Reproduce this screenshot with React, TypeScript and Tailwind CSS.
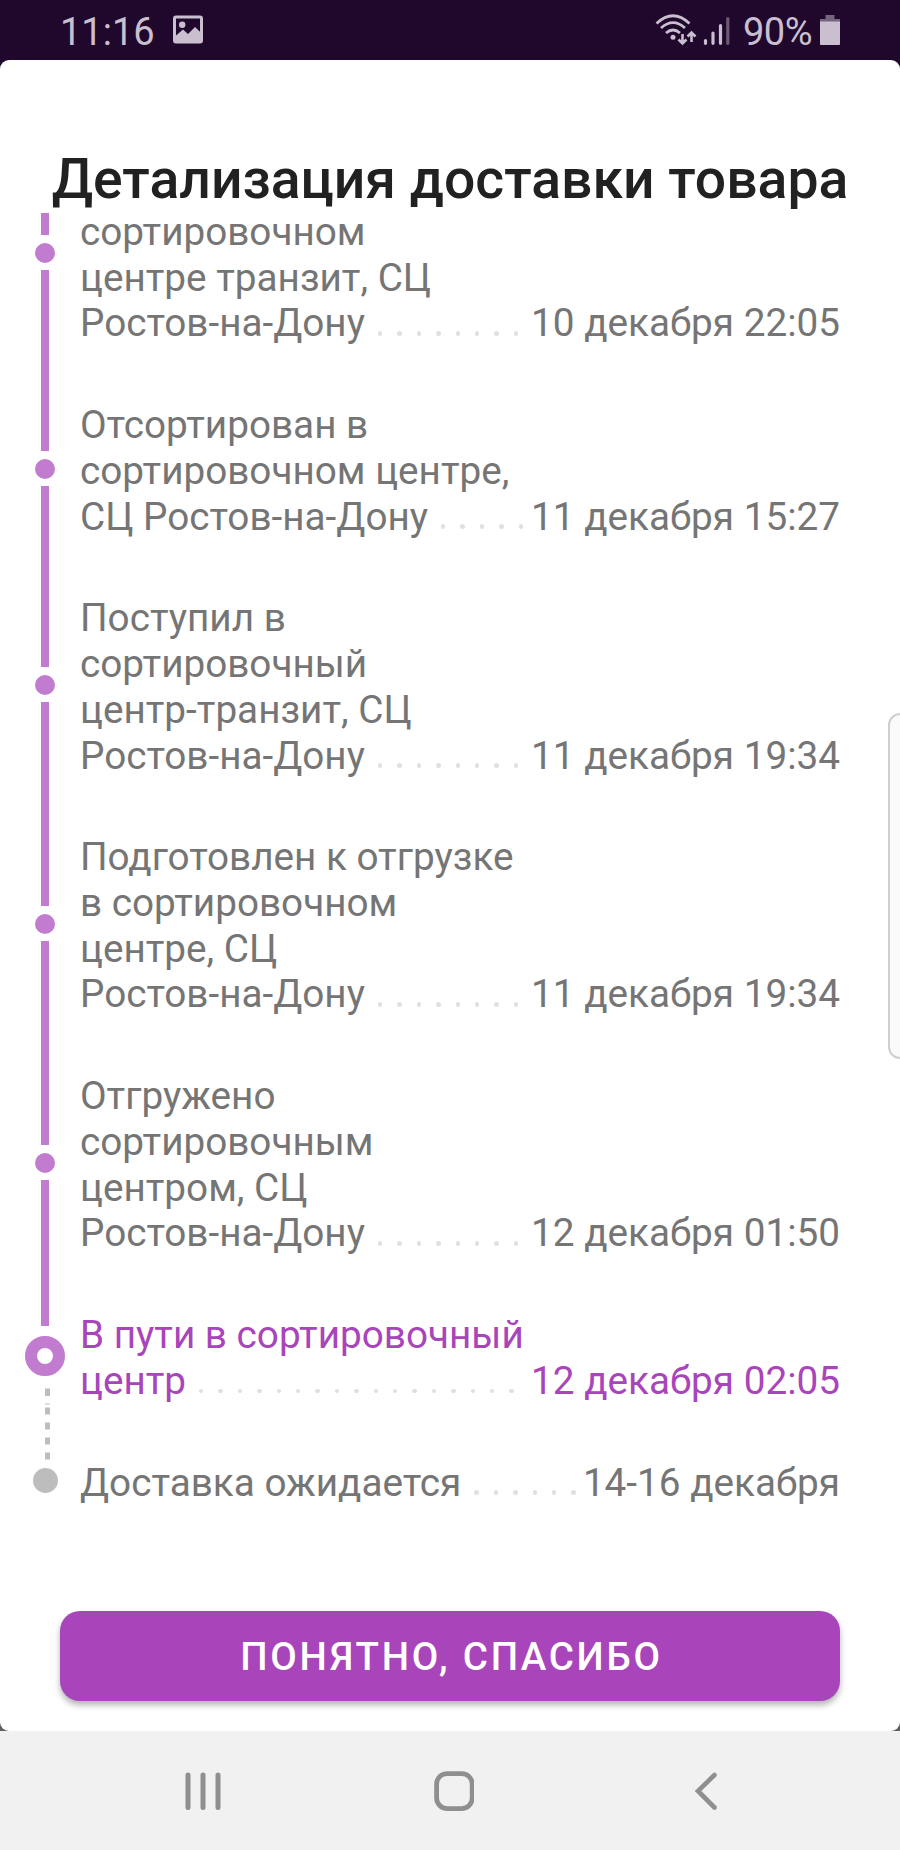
import React from 'react';
import clsx from 'clsx';

interface Step {
  lines: string[];
  date: string;
  dots: number;
  state: 'first' | 'done' | 'current' | 'pending';
}

const steps: Step[] = [
  { lines: ['сортировочном', 'центре транзит, СЦ', 'Ростов-на-Дону'], date: '10 декабря 22:05', dots: 8, state: 'first' },
  { lines: ['Отсортирован в', 'сортировочном центре,', 'СЦ Ростов-на-Дону'], date: '11 декабря 15:27', dots: 5, state: 'done' },
  { lines: ['Поступил в', 'сортировочный', 'центр-транзит, СЦ', 'Ростов-на-Дону'], date: '11 декабря 19:34', dots: 8, state: 'done' },
  { lines: ['Подготовлен к отгрузке', 'в сортировочном', 'центре, СЦ', 'Ростов-на-Дону'], date: '11 декабря 19:34', dots: 8, state: 'done' },
  { lines: ['Отгружено', 'сортировочным', 'центром, СЦ', 'Ростов-на-Дону'], date: '12 декабря 01:50', dots: 8, state: 'done' },
  { lines: ['В пути в сортировочный', 'центр'], date: '12 декабря 02:05', dots: 17, state: 'current' },
  { lines: ['Доставка ожидается'], date: '14-16 декабря', dots: 6, state: 'pending' },
];

function StatusBar() {
  return (
    <header className="flex h-[60px] shrink-0 items-start justify-between bg-[#1f082c] px-[60px] text-[#c9bfcf]">
      <div className="flex items-start">
        <span className="mt-[10px] w-[113px] text-[38px] leading-[44px]">11:16</span>
        <svg className="mt-[15px]" width="30" height="29" viewBox="0 0 30 29">
          <path
            fill="currentColor"
            fillRule="evenodd"
            d="M3 0.5h24a3 3 0 0 1 3 3v22a3 3 0 0 1-3 3H3a3 3 0 0 1-3-3v-22a3 3 0 0 1 3-3zM3 3.5v17l7-6 5 4.5 7-7 5 4.8V3.5z"
          />
          <circle cx="9.2" cy="9.8" r="3.2" fill="currentColor" />
        </svg>
      </div>
      <div className="flex items-start">
        <svg className="mt-[14px]" width="76" height="32" viewBox="0 0 76 32" fill="none" stroke="currentColor">
          <g strokeWidth="2.7">
            <path d="M1.5 9.5Q18-6 34.5 9.5" />
            <path d="M6 14Q18 3.2 30 14" />
            <path d="M11 19Q18 13 25 19" />
          </g>
          <circle cx="18" cy="23.3" r="2.5" fill="currentColor" stroke="none" />
          <path strokeWidth="2.6" d="M27.5 20v9M23.5 25.5l4 4 4-4M36.5 28v-9M32.5 22.5l4-4 4 4" />
          <g strokeWidth="3.2" strokeLinecap="round">
            <path d="M50.5 26.5v2.8M58 19v10.3M65.5 11.5v17.8" />
            <path d="M72.8 4.5v24.8" opacity="0.45" />
          </g>
        </svg>
        <span className="ml-[12px] mt-[10px] w-[77px] whitespace-nowrap text-[38px] leading-[44px] tracking-[-0.5px]">90%</span>
        <svg className="mt-[15px]" width="20" height="30" viewBox="0 0 20 30" fill="currentColor">
          <path d="M5.5 0h9v4H20v3H0V4h5.5z" opacity="0.5" />
          <path d="M0 6.5h20V29a1 1 0 0 1-1 1H1a1 1 0 0 1-1-1z" />
        </svg>
      </div>
    </header>
  );
}

function Rail({ state }: { state: Step['state'] }) {
  if (state === 'pending') {
    return (
      <div className="flex w-20 shrink-0 items-center pl-[32.5px]">
        <span className="size-[25px] rounded-full bg-[#bdbdbd]" />
      </div>
    );
  }

  if (state === 'current') {
    return (
      <div className="flex w-20 shrink-0 flex-col items-center pl-[10px]">
        <span className="mb-[10px] w-2 flex-1 bg-[#c27ccf]" />
        <span className="size-10 rounded-full border-[12.5px] border-[#c27ccf]" />
        {/* the dashes run on into the pending step */}
        <div className="h-[53.5px] w-[5px] pt-3">
          <svg className="ml-[2.5px] overflow-visible" width="5" height="72" viewBox="0 0 5 72" fill="#bdbdbd">
            <path d="M0 0.5h5v7.5H0zM0 15.5h5v1H0zM0 19.5h5v7H0zM0 34.5h5v7H0zM0 49.5h5v7H0zM0 64.5h5v7H0z" />
          </svg>
        </div>
      </div>
    );
  }

  return (
    <div className="flex w-20 shrink-0 flex-col items-center pl-[10px]">
      <span className={clsx('w-2 bg-[#c27ccf]', state === 'first' ? 'h-[22px]' : 'flex-1')} />
      <span className="my-[7.5px] size-5 rounded-full bg-[#c27ccf]" />
      <span className="w-2 flex-1 bg-[#c27ccf]" />
    </div>
  );
}

function Leader({ count }: { count: number }) {
  return (
    <span className="ml-[13px] flex flex-1 gap-[15px] pb-[10.5px]">
      {Array.from({ length: count }, (_, i) => (
        <i key={i} className="size-[4.4px] shrink-0 rounded-full bg-[#e0e0e0]" />
      ))}
    </span>
  );
}

function StepRow({ step }: { step: Step }) {
  const head = step.lines.slice(0, -1);
  const last = step.lines[step.lines.length - 1];

  return (
    <li className="flex pr-[60px]">
      <Rail state={step.state} />
      <div
        className={clsx(
          'flex-1 whitespace-nowrap pb-[26px] text-[38.7px] leading-[45.7px]',
          step.state === 'first' ? '-mt-1' : 'pt-[30.1px]',
          step.state === 'current' ? 'text-[#a845bb]' : 'text-[#757575]'
        )}
      >
        {head.map((line) => (
          <p key={line}>{line}</p>
        ))}
        <div className="flex items-end">
          <span>{last}</span>
          <Leader count={step.dots} />
          <time>{step.date}</time>
        </div>
      </div>
    </li>
  );
}

function NavBar() {
  return (
    <nav className="flex h-[119px] shrink-0 items-start bg-[#f1f1f1] pt-[40px]">
      <button className="ml-[183px]">
        <svg width="40" height="40" viewBox="0 0 40 40" stroke="#8f8f8f" strokeWidth="5" strokeLinecap="round">
          <path d="M5 4v32.5M20 4v32.5M35 4v32.5" />
        </svg>
      </button>
      <button className="ml-[211px]">
        <svg width="40" height="41" viewBox="0 0 40 41" fill="none" stroke="#8f8f8f" strokeWidth="4.8">
          <rect x="2.6" y="2.6" width="35.6" height="35" rx="10.5" />
        </svg>
      </button>
      <button className="ml-[219px]">
        <svg width="26" height="40" viewBox="0 0 26 40" fill="none" stroke="#8f8f8f" strokeWidth="4.6" strokeLinecap="round">
          <path d="M21.5 4L5 20l16.500 16.500" />
        </svg>
      </button>
    </nav>
  );
}

export default function App() {
  return (
    <div className="relative flex h-[1850px] w-[900px] flex-col overflow-hidden bg-[#666] font-['Roboto',sans-serif]">
      <StatusBar />
      <div className="flex h-[1671px] shrink-0 flex-col bg-[linear-gradient(#1f082c_50%,#606060_50%)]">
        <main className="flex flex-1 flex-col rounded-[9px] bg-white">
          <h1 className="mt-[87px] h-[66px] whitespace-nowrap text-center text-[55.3px] font-medium leading-[65px] text-[#212121]">
            Детализация доставки товара
          </h1>
          <ul className="h-[1340px]">
            {steps.map((step, i) => (
              <StepRow key={i} step={step} />
            ))}
          </ul>
          <button className="mx-[60px] mt-[58px] h-[90px] rounded-[20px] bg-[#a845bb] pl-[3px] pt-[2px] text-[38.5px] font-medium tracking-[2.75px] text-white shadow-[0_4px_6px_rgba(0,0,0,0.3)]">
            ПОНЯТНО, СПАСИБО
          </button>
        </main>
      </div>
      <NavBar />
      {/* edge panel handle */}
      <div className="absolute -right-[12px] top-[713px] h-[346px] w-[24.5px] rounded-[14px] border-2 border-[#cfcfcf] bg-[#fafafa]" />
    </div>
  );
}
